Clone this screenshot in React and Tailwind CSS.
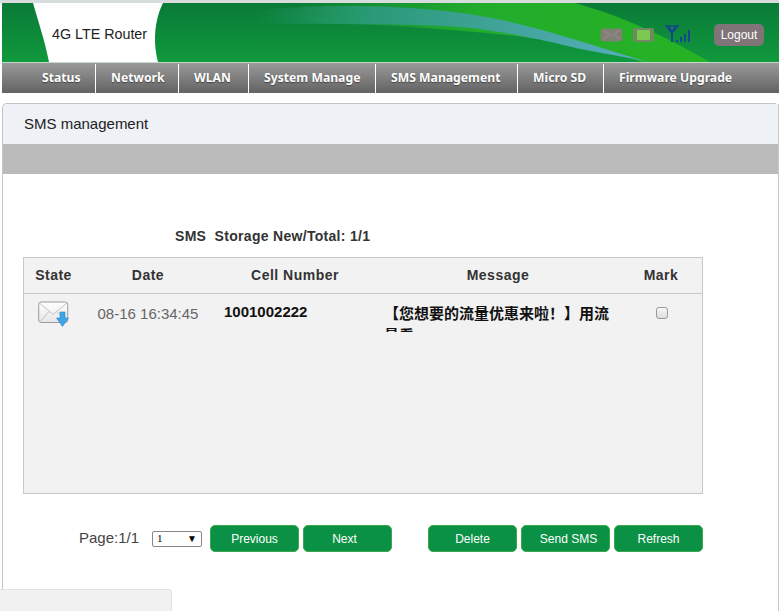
import React from "react";

const navItems = [
    { label: "Status", width: "w-[94px]", pad: "pl-[40px]" },
    { label: "Network", width: "w-[83px]", pad: "pl-[15px]" },
    { label: "WLAN", width: "w-[70px]", pad: "pl-[15px]" },
    { label: "System Manage", width: "w-[127px]", pad: "pl-[15px]" },
    { label: "SMS Management", width: "w-[142px]", pad: "pl-[15px]" },
    { label: "Micro SD", width: "w-[86px]", pad: "pl-[15px]" },
];

const HeaderArt = () => (
    <svg className="absolute inset-0 h-full w-full" viewBox="0 0 777 59" preserveAspectRatio="none">
        <defs>
            <linearGradient id="base" x1="0" y1="0" x2="0" y2="1">
                <stop offset="0" stopColor="#0a7a38" />
                <stop offset="1" stopColor="#10993c" />
            </linearGradient>
            <linearGradient id="light" x1="0" y1="0" x2="1" y2="0">
                <stop offset="0" stopColor="#22ac2c" stopOpacity="0" />
                <stop offset="0.45" stopColor="#22ac2c" />
                <stop offset="1" stopColor="#27b324" />
            </linearGradient>
            <linearGradient id="blue" x1="0" y1="0" x2="1" y2="0">
                <stop offset="0" stopColor="#2a9a78" stopOpacity="0" />
                <stop offset="0.3" stopColor="#2a9a78" />
                <stop offset="1" stopColor="#5aaec0" />
            </linearGradient>
        </defs>
        <rect width="777" height="59" fill="url(#base)" />
        <path d="M290 0 L 573 0 C 635 18 670 38 708 59 L 640 59 C 560 30 420 24 290 18 Z" fill="url(#light)" />
        <path d="M255 7 C 300 3 350 2 389 4 C 430 6 460 9 489 15 C 530 22 590 42 646 59 C 610 51 590 49 570 44 C 530 34 500 29 470 25 C 420 20 330 22 255 20 Z" fill="url(#blue)" />
        <path d="M31 0 L 161 0 C 154 14 150 35 156 59 L 47 59 C 43 38 36 18 31 0 Z" fill="#ffffff" />
    </svg>
);

const StatusIcons = () => (
    <div className="absolute left-[598px] top-[21px] flex items-start">
        <svg width="23" height="14" viewBox="0 0 23 14" className="mt-[4px]">
            <rect x="0.5" y="0.5" width="22" height="13" rx="3" fill="#7c8470" />
            <path d="M3 2 L11.5 8 L20 2 M3 12 L9 6.5 M20 12 L14 6.5" stroke="#94808c" strokeWidth="1.8" fill="none" />
        </svg>
        <svg width="21" height="14" viewBox="0 0 21 14" className="ml-[10px] mt-[4px]">
            <rect x="0" y="0" width="21" height="14" rx="2" fill="#6f8a60" />
            <rect x="4" y="2" width="13" height="10" fill="#7cc850" />
        </svg>
        <svg width="26" height="18" viewBox="0 0 26 18" className="ml-[11px] mt-[1px]">
            <path d="M1 1 H13 L7 8 Z M4 2 L7 7 L10 2" stroke="#14488c" strokeWidth="1.5" fill="none" />
            <path d="M7 7 V17" stroke="#14488c" strokeWidth="2" />
            <path d="M11 15 h2 v2 h-2 z M15 12 h2 v5 h-2 z M19 9 h2 v8 h-2 z M23 5 h2 v12 h-2 z" fill="#14488c" />
        </svg>
    </div>
);

const MailIcon = () => (
    <svg width="32" height="27" viewBox="0 0 32 27">
        <defs>
            <linearGradient id="env" x1="0" y1="0" x2="0" y2="1">
                <stop offset="0" stopColor="#ffffff" />
                <stop offset="1" stopColor="#e6e6e6" />
            </linearGradient>
        </defs>
        <rect x="0.7" y="1" width="29" height="20.5" rx="2.5" fill="url(#env)" stroke="#9a9a9a" />
        <path d="M1.5 2 L15 13.5 L29 2 M2 21 L11 10.5 M28.5 21 L19 10.5" stroke="#c4c4c4" fill="none" />
        <path d="M22 11 h5 v6 h3.5 L24.5 25.5 L18.5 17 H22 Z" fill="#3ea4e6" stroke="#2a8ad0" strokeWidth="0.6" />
    </svg>
);

const GreenButton = ({ children, className = "" }) => (
    <button
        type="button"
        className={`h-[27px] w-[89px] rounded-[5px] border border-[#3aa84a] bg-[#0b9146] text-[12px] text-white ${className}`}
    >
        {children}
    </button>
);

export default function App() {
    return (
        <div className="relative h-[611px] w-[779px] overflow-hidden bg-white font-['Liberation_Sans',sans-serif]">
            <div className="h-[3px] bg-[#d8dcdc]" />
            <div className="relative ml-[2px] h-[59px]">
                <HeaderArt />
                <div className="absolute left-[50px] top-[23px] text-[14.3px] leading-4 text-[#222]">4G LTE Router</div>
                <StatusIcons />
                <div className="absolute left-[712px] top-[21px] flex h-[22px] w-[50px] items-center justify-center rounded-[5px] bg-[#7f7478] text-[12px] text-white">
                    Logout
                </div>
            </div>

            <div className="ml-[2px] flex h-[31px] border-t border-[#c9d6cc] bg-gradient-to-b from-[#9a9a9a] to-[#636363] pt-[1px] font-['Noto_Sans',sans-serif] text-[12.2px] font-bold text-white [text-shadow:0_1px_1px_#444]">
                {navItems.map((item) => (
                    <div key={item.label} className={`flex items-center border-r border-white ${item.width} ${item.pad}`}>
                        {item.label}
                    </div>
                ))}
                <div className="flex items-center pl-[15px]">Firmware Upgrade</div>
            </div>

            <div className="ml-[2px] mt-[10px] h-[520px] rounded-t-[5px] border-l border-t border-[#c4c4c4]">
                <div className="flex h-[40px] items-center rounded-tl-[5px] bg-[#eef1f5] pl-[21px] text-[15px] text-[#222]">
                    SMS management
                </div>
                <div className="h-[30px] bg-[#bbbbbb]" />

                <div className="pl-[172px] pt-[52px] text-[14px] font-bold leading-5 tracking-[0.3px] text-[#333]">
                    SMS&nbsp; Storage New/Total: 1/1
                </div>

                <div className="ml-[20px] mt-[11px] h-[237px] w-[680px] border border-[#c8c8c8] bg-[#f2f2f2]">
                    <div className="grid h-[36px] grid-cols-[59px_130px_164px_242px_84px] items-center border-b border-[#c8c8c8] text-center text-[14px] font-bold tracking-[0.5px] text-[#333]">
                        <div>State</div>
                        <div>Date</div>
                        <div>Cell Number</div>
                        <div>Message</div>
                        <div>Mark</div>
                    </div>
                    <div className="grid grid-cols-[59px_130px_164px_242px_84px] items-start">
                        <div className="pl-[14px] pt-[7px]">
                            <MailIcon />
                        </div>
                        <div className="pt-[12px] text-center text-[15px] leading-4 text-[#666]">08-16 16:34:45</div>
                        <div className="pl-[11px] pt-[10px] text-[15px] font-bold leading-4 text-[#111]">1001002222</div>
                        <div className="ml-[7px] mt-[9px] h-[29px] w-[226px] overflow-hidden text-[15px] font-bold leading-[22px] text-[#111] [font-family:'Liberation_Sans','Noto_Sans_CJK_SC',sans-serif]">
                            【您想要的流量优惠来啦！】用流量看
                        </div>
                        <div className="flex justify-center pl-[1px] pt-[13px]">
                            <span className="block h-[12px] w-[12px] rounded-[3px] border border-[#9a9a9a] bg-gradient-to-b from-[#f8f8f8] to-[#dcdcdc]" />
                        </div>
                    </div>
                </div>

                <div className="mt-[31px] flex items-center pl-[76px]">
                    <span className="w-[73px] text-[15px] text-[#444]">Page:1/1</span>
                    <div className="mr-[8px] flex h-[16px] w-[50px] items-center justify-between rounded-[2px] border border-[#888] bg-white pl-[4px] pr-[4px] font-['Liberation_Serif',serif] text-[11px] text-black">
                        1<span className="text-[10px] leading-none">▼</span>
                    </div>
                    <GreenButton className="mr-[4px]">Previous</GreenButton>
                    <GreenButton className="mr-[36px] pr-[6px]">Next</GreenButton>
                    <GreenButton className="mr-[4px]">Delete</GreenButton>
                    <GreenButton className="mr-[4px] pl-[6px]">Send SMS</GreenButton>
                    <GreenButton>Refresh</GreenButton>
                </div>
            </div>

            <div className="absolute bottom-0 left-0 h-[22px] w-[172px] rounded-tr-[4px] border-r border-t border-[#e2e2e2] bg-[#f1f1f1]" />
            <div className="absolute right-0 top-[104px] h-[507px] w-px bg-[#c8c8c8]" />
        </div>
    );
}
